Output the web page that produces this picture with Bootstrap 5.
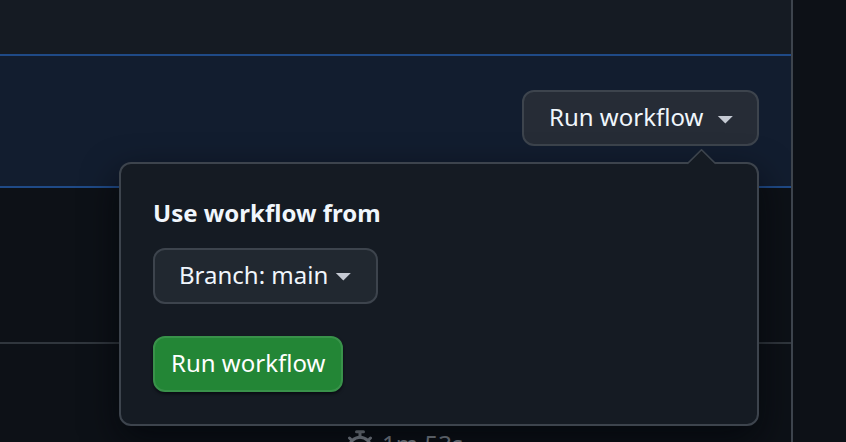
<!DOCTYPE html>
<html lang="en" data-bs-theme="dark">
<head>
<meta charset="utf-8">
<meta name="viewport" content="width=device-width, initial-scale=1">
<title>Run workflow</title>
<link href="https://cdn.jsdelivr.net/npm/bootstrap@5.3.0/dist/css/bootstrap.min.css" rel="stylesheet">
<style>
body{background:#0d1117;color:#f0f6fc;font:24px/36px "Noto Sans",sans-serif}
.runs-panel{width:793px;border-right:2px solid #3d444d}
.list-head{height:54px;background:#151b23}
.dispatch-bar{height:134px;background:#121d2f;border-top:2px solid #1f4a87;border-bottom:2px solid #1f4a87;padding:34px 32px 0 0}
.run-row{height:156px;border-bottom:2px solid #30363d}
.run-next{height:98px;padding:82px 0 0 346px;color:#8b929b}
.gh-btn{--bs-btn-font-size:24px;--bs-btn-line-height:36px;--bs-btn-padding-y:0;--bs-btn-border-width:2px;--bs-btn-border-radius:12px;--bs-btn-color:#f0f6fc;--bs-btn-bg:#262c36;--bs-btn-border-color:#3d444d;font-family:inherit;height:56px;padding-bottom:2px;white-space:nowrap}
.toggle-main{width:237px;padding-left:25px}
.toggle-branch{width:225px;padding-left:24px;--bs-btn-bg:#212830}
.submit-run{width:190px;padding-left:16px;--bs-btn-bg:#238636;--bs-btn-border-color:#39924a;--bs-btn-color:#fff;box-shadow:0 2px 3px #01040999}
.caret{width:16px;height:8px;margin:3px 0 0 7px;background:#c5cad3;clip-path:polygon(0 0,100% 0,50% 100%)}
.toggle-main .caret{margin:5px 0 0 14px}
.run-menu{top:72px;right:0;width:640px;height:264px;background:#151b23;border:2px solid #3d444d;border-radius:12px;padding:31px 32px;box-shadow:0 14px 36px #010409aa}
.menu-tip{top:-15px;right:39px;width:32px;height:16px}
.menu-title{font-size:24px;line-height:36px;margin-bottom:17px;color:#f0f6fc}
</style>
</head>
<body class="overflow-hidden">
<main class="runs-panel vh-100 overflow-hidden">
  <div class="list-head"></div>
  <div class="dispatch-bar d-flex justify-content-end">
    <div class="dropdown">
      <button class="btn gh-btn toggle-main d-flex align-items-center" type="button"><span>Run workflow</span><span class="caret"></span></button>
      <div class="run-menu position-absolute z-3 d-flex flex-column align-items-start">
        <svg class="menu-tip position-absolute" viewBox="0 0 32 16" fill="none"><path d="M1 16V15L15.5 1 30 15V16Z" fill="#151b23"/><path d="M1 14.5L2 14 15.5 .8 29 14L30 14.5" stroke="#3d444d" stroke-width="1.6"/></svg>
        <h2 class="menu-title fw-bold">Use workflow from</h2>
        <button class="btn gh-btn toggle-branch d-flex align-items-center mb-4" type="button"><span>Branch: main</span><span class="caret"></span></button>
        <button class="btn gh-btn submit-run text-start mt-2" type="button">Run workflow</button>
      </div>
    </div>
  </div>
  <div class="run-row"></div>
  <div class="run-next d-flex align-items-start">
    <svg class="flex-shrink-0 mt-1" width="28" height="32" viewBox="0 0 28 32" fill="none" stroke="currentColor" stroke-width="3" stroke-linecap="round"><path d="M10.5 1.8H17.5M14 2V7M3.5 8L6 10.5M24.5 8L22 10.5"/><circle cx="14" cy="18" r="10.8"/></svg>
    <span class="ms-2">1m 53s</span>
  </div>
</main>
<script src="https://cdn.jsdelivr.net/npm/bootstrap@5.3.0/dist/js/bootstrap.bundle.min.js"></script>
</body>
</html>
